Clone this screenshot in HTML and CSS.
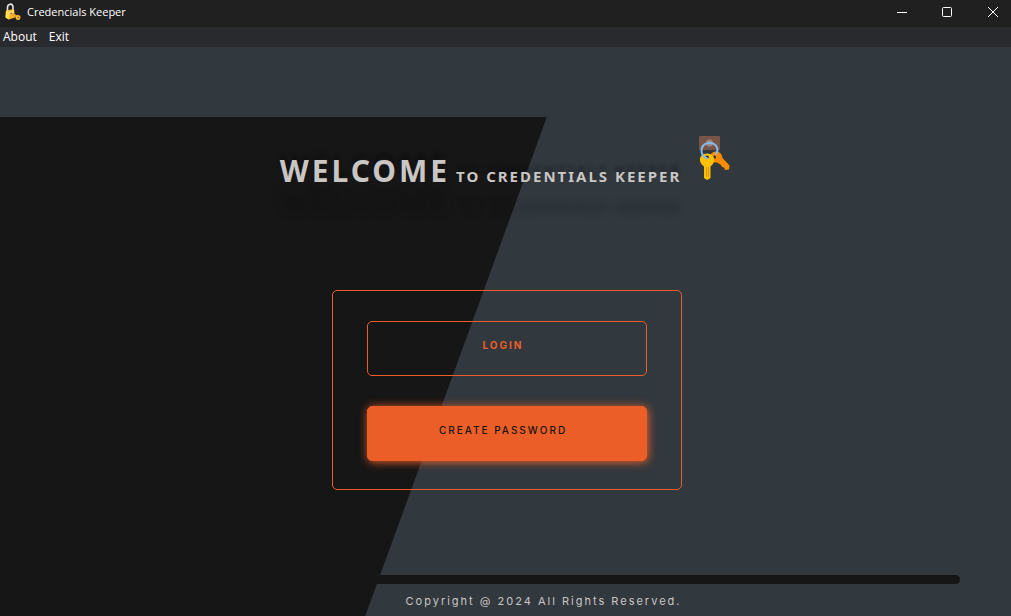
FILE: index.html
```html
<!DOCTYPE html>
<html lang="en">
<head>
<meta charset="utf-8">
<title>Credencials Keeper</title>
<link rel="stylesheet" href="styles.css">
</head>
<body>
<header class="titlebar">
  <svg class="app-icon" viewBox="0 0 16 18" aria-hidden="true">
    <path d="M2.5 8V4.5C2.5 0.5 7.5-.2 8 4v3" fill="none" stroke="#e8e8e8" stroke-width="1.6"/>
    <path d="M1 7.5 9 6l1 8.500-6 2-3.500-2z" fill="#f5b52e"/>
    <path d="M1 7.5 4 8.5v8l-3.500-2z" fill="#ffe04d"/>
    <path d="M4 8.500 9 6.500v3l-5 3z" fill="#ffd766"/>
    <circle cx="6" cy="10.500" r=".7" fill="#51401e"/>
    <path d="m7 11 6 3" stroke="#f0a72c" stroke-width="2"/>
    <circle cx="13" cy="14.500" r="1.600" fill="none" stroke="#f5b52e" stroke-width="1.800"/>
  </svg>
  <span class="app-name">Credencials Keeper</span>
  <div class="window-controls">
    <button type="button" aria-label="Minimize"><svg viewBox="0 0 12 12"><path d="M1 6.500h10"/></svg></button>
    <button type="button" aria-label="Maximize"><svg viewBox="0 0 12 12"><rect x="1.500" y="1.500" width="9" height="9" rx="1"/></svg></button>
    <button type="button" aria-label="Close"><svg viewBox="0 0 12 12"><path d="m1 1 10 10M11 1 1 11"/></svg></button>
  </div>
</header>
<nav class="menubar">
  <button type="button">About</button>
  <button type="button">Exit</button>
</nav>
<div class="stage">
  <main class="content">
    <div class="hero">
      <h1 class="heading"><span class="welcome">WELCOME</span> TO CREDENTIALS KEEPER</h1>
      <svg class="keys" viewBox="0 0 32 46" aria-hidden="true">
        <rect x="0" y="1" width="21" height="14" rx="1" fill="#795548"/>
        <circle cx="10.500" cy="8" r="3.500" fill="#a1887f"/>
        <path fill="#fb8c00" fill-rule="evenodd" d="M13 18c4-3 10-1 10.500 5l7 7.500-.5 4-4 .5-1-2.500-2-.5-1-2-4-2.500c-6 1-10-5-5-9.500zm1.500 3a1.500 1.500 0 1 0 2.500 1.500 1.500 1.500 0 0 0-2.500-1.500z"/>
        <path fill="#ffc107" fill-rule="evenodd" d="M8 18.500c8 0 9.500 9 3.500 13V43L8 45l-3-2V31.500c-6.500-4-5-13 3-13zm0 2a2 1.500 0 1 0 0 3 2 1.500 0 0 0 0-3z"/>
        <path d="M7.500 32v10M9.500 32v10" stroke="#d99500"/>
        <path d="M8 23.500C-1 19 2 8 10.500 8 18 8 20 15 17 19" fill="none" stroke="#82bdf2" stroke-width="2" stroke-linecap="round"/>
      </svg>
    </div>
    <form class="card">
      <button class="action login" type="button">LOGIN</button>
      <button class="action create" type="button">CREATE PASSWORD</button>
    </form>
  </main>
  <footer class="footer">
    <div class="rule"></div>
    <p class="copyright">Copyright @ 2024 All Rights Reserved.</p>
  </footer>
</div>
</body>
</html>
```
FILE: styles.css
```css
:root {
  --slate: #31383e;
  --ink: #161616;
  --orange: #eb5e28;
  --light: #c9c6c4;
}

* {
  box-sizing: border-box;
}

body {
  margin: 0;
  min-height: 100vh;
  display: flex;
  flex-direction: column;
  background: var(--slate);
  color: #fff;
  font-family: "Open Sans", "Noto Sans", sans-serif;
}

button {
  font: inherit;
  color: inherit;
  background: none;
  border: 0;
  padding: 0;
}

.titlebar {
  display: flex;
  align-items: center;
  height: 27px;
  padding: 0 0 4px 5px;
  background: #202020;
  font-size: 11px;
}

.app-icon {
  width: 16px;
  height: 18px;
  margin-right: 6px;
}

.window-controls {
  display: flex;
  margin-left: auto;
}

.window-controls button {
  display: flex;
  align-items: center;
  justify-content: center;
  width: 45px;
  height: 23px;
}

.window-controls button:last-child {
  width: 46px;
}

.window-controls svg {
  width: 12px;
  height: 12px;
  margin-left: 9px;
  fill: none;
  stroke: #fff;
}

.menubar {
  display: flex;
  align-items: center;
  gap: 12px;
  height: 20px;
  padding: 0 0 2px 3px;
  background: #292a2d;
  font-size: 12px;
}

.stage {
  flex: 1;
  display: flex;
  flex-direction: column;
  margin-top: 70px;
  background: linear-gradient(110deg, var(--ink) calc(50% - 47px), var(--slate) calc(50% - 46px));
}

.content {
  flex: 1;
  display: flex;
  flex-direction: column;
  align-items: center;
}

.hero {
  display: flex;
  align-items: flex-start;
  gap: 18px;
  padding-top: 18px;
}

.heading {
  margin: 14px 0 0;
  color: var(--light);
  font-family: "Noto Sans", sans-serif;
  font-size: 15px;
  line-height: 44px;
  font-weight: 700;
  letter-spacing: 2px;
  text-shadow: 0 -6px 4px rgba(0, 0, 0, 0.3), 0 30px 10px rgba(0, 0, 0, 0.2);
}

.welcome {
  font-size: 30px;
  letter-spacing: 3px;
}

.keys {
  width: 32px;
  height: 46px;
}

.card {
  display: flex;
  flex-direction: column;
  gap: 30px;
  width: 350px;
  margin: 92px 0 0 3px;
  padding: 30px 34px 28px;
  border: 1px solid var(--orange);
  border-radius: 5px;
}

.action {
  height: 55px;
  padding: 0 8px 8px 0;
  border: 1px solid var(--orange);
  border-radius: 5px;
  font-family: Inter, sans-serif;
  font-size: 10px;
  letter-spacing: 2px;
}

.login {
  color: var(--orange);
  font-weight: 700;
}

.create {
  background: var(--orange);
  color: var(--ink);
  font-weight: 500;
  box-shadow: 1px 1px 10px var(--orange);
}

.rule {
  width: 90%;
  height: 9px;
  margin: 0 auto;
  border-radius: 5px;
  background: var(--ink);
}

.copyright {
  margin: 0;
  padding: 6px 0 4px 76px;
  text-align: center;
  color: var(--light);
  font-family: Inter, sans-serif;
  font-size: 11px;
  line-height: 22px;
  letter-spacing: 2px;
}
```
